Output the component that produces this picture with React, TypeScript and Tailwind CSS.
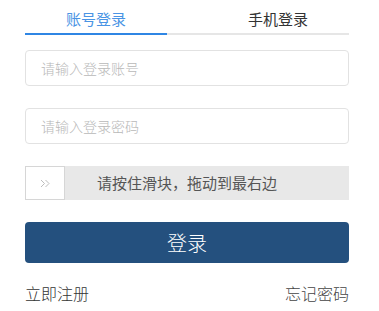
import { useState } from 'react';

export default function App() {
  const [tab, setTab] = useState<'account' | 'phone'>('account');

  return (
    <div
      className="w-[379px] h-[311px] bg-white overflow-hidden"
      style={{ fontFamily: '"Microsoft YaHei", "Noto Sans CJK SC", sans-serif' }}
    >
      <div className="ml-[25px] w-[324px]">
        <div className="flex justify-between border-b-2 border-[#e6e6e6] h-[35px]">
          <button
            onClick={() => setTab('account')}
            className={`w-[142px] -mb-[2px] pt-[5px] text-[15px] leading-[20px] border-b-2 ${
              tab === 'account' ? 'text-[#4a94e4] border-[#2f86e4]' : 'text-[#333] border-transparent'
            }`}
          >
            账号登录
          </button>
          <button
            onClick={() => setTab('phone')}
            className={`w-[142px] -mb-[2px] pt-[5px] text-[15px] leading-[20px] border-b-2 ${
              tab === 'phone' ? 'text-[#4a94e4] border-[#2f86e4]' : 'text-[#333] border-transparent'
            }`}
          >
            手机登录
          </button>
        </div>

        <input
          placeholder="请输入登录账号"
          className="mt-[15px] block w-full h-[36px] rounded-[4px] border border-[#e2e2e2] px-[15px] text-[14px] font-light placeholder:text-[#b8b8b8] outline-none"
        />
        <input
          type="password"
          placeholder="请输入登录密码"
          className="mt-[22px] block w-full h-[36px] rounded-[4px] border border-[#e2e2e2] px-[15px] text-[14px] font-light placeholder:text-[#b8b8b8] outline-none"
        />

        <div className="relative mt-[22px] h-[34px] bg-[#e8e8e8] flex items-center justify-center">
          <span className="text-[15px] text-[#555]">请按住滑块，拖动到最右边</span>
          <div className="absolute left-0 top-0 w-[40px] h-[34px] bg-white border border-[#d6d6d6] flex items-center justify-center">
            <svg width="11" height="9" viewBox="0 0 11 9" fill="none" stroke="#bdbdbd" strokeWidth="1">
              <path d="M1 1l3.5 3.5L1 8M5.5 1L9 4.5 5.5 8" />
            </svg>
          </div>
        </div>

        <button className="mt-[22px] block w-full h-[41px] rounded-[4px] bg-[#24507e] text-white text-[20px] font-light">
          登录
        </button>

        <div className="mt-[19px] flex justify-between text-[16px] leading-[22px] font-light text-[#333]">
          <a>立即注册</a>
          <a className="text-[#444]">忘记密码</a>
        </div>
      </div>
    </div>
  );
}
